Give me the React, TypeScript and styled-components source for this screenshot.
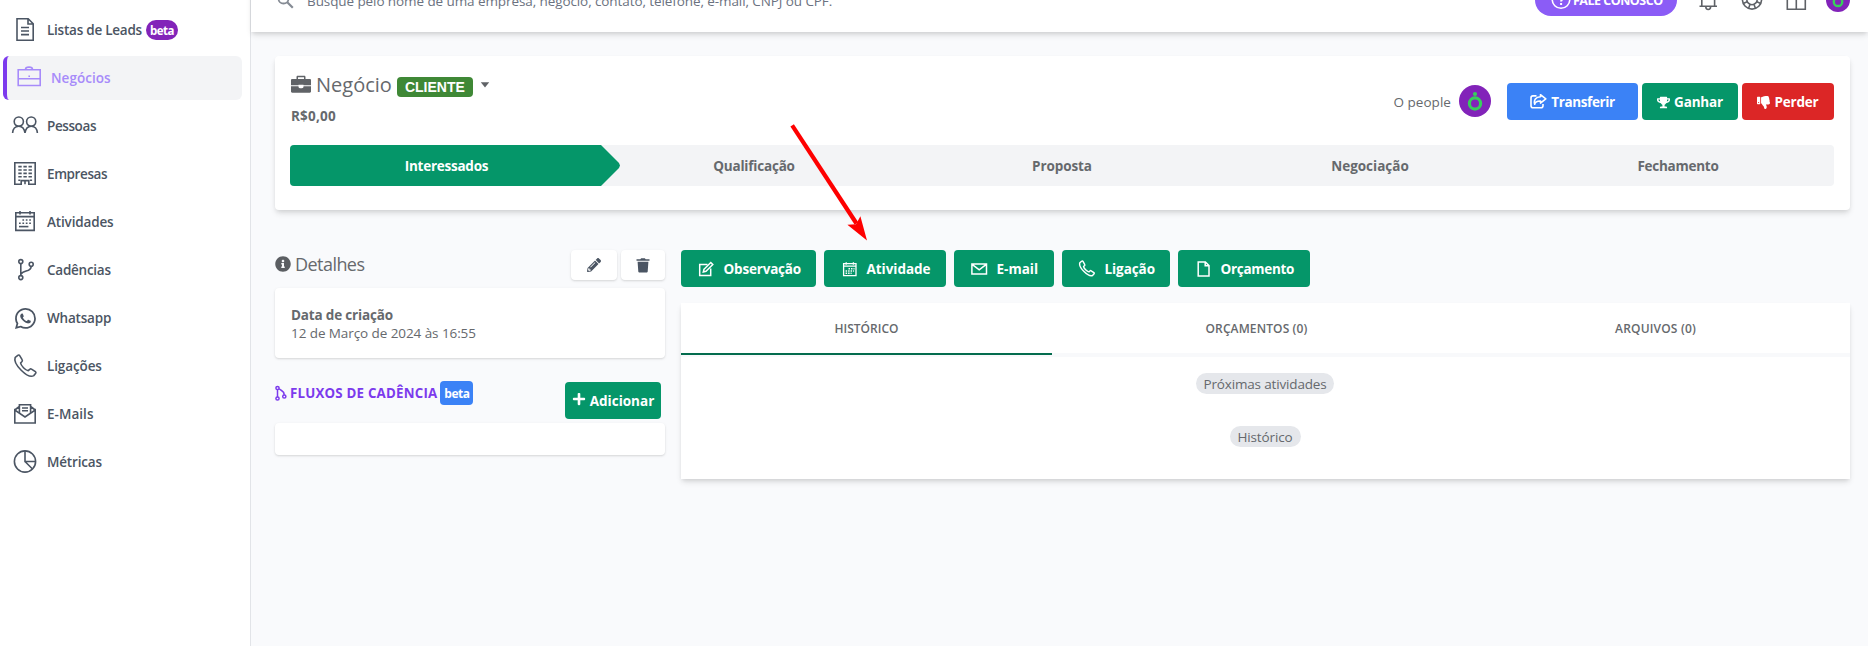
import React from 'react';
import styled, { createGlobalStyle, css } from 'styled-components';
import { FaInfoCircle, FaPlus, FaTrophy, FaThumbsDown, FaPencilAlt } from 'react-icons/fa';
import { BsWhatsapp } from 'react-icons/bs';

const GlobalStyle = createGlobalStyle`
  * { box-sizing: border-box; }
  body {
    margin: 0;
    background: #f9fafc;
    color: #66696d;
    font-family: 'Open Sans', 'Noto Sans', sans-serif;
    font-size: 13.5px;
  }
`;

const green = '#059669';
const cardShadow = '0 1px 3px rgba(0, 0, 0, 0.1), 0 1px 2px rgba(0, 0, 0, 0.06)';
const deepShadow = '0 4px 6px -1px rgba(0, 0, 0, 0.12), 0 2px 4px -1px rgba(0, 0, 0, 0.08)';

/* ---------- shared ---------- */

const Label = styled.span<{ $ls?: number; $size?: number; $weight?: number }>`
  white-space: nowrap;
  letter-spacing: ${(p) => p.$ls ?? 0}px;
  ${(p) => p.$size && css`font-size: ${p.$size}px;`}
  ${(p) => p.$weight && css`font-weight: ${p.$weight};`}
`;

const Svg = styled.svg<{ $sw?: number }>`
  flex: none;
  fill: none;
  stroke: currentColor;
  stroke-width: ${(p) => p.$sw ?? 1.6};
`;

const Button = styled.button<{ $bg?: string; $w: number }>`
  display: flex;
  align-items: center;
  justify-content: center;
  width: ${(p) => p.$w}px;
  height: 37px;
  padding: 1px 0 0;
  border: 0;
  border-radius: 4px;
  background: ${(p) => p.$bg ?? green};
  color: #fff;
  font: 700 13.5px 'Open Sans', 'Noto Sans', sans-serif;
  svg { flex: none; }
`;

/* ---------- page frame ---------- */

const Page = styled.div`
  display: flex;
  height: 646px;
  overflow: hidden;
`;

const Sidebar = styled.nav`
  display: flex;
  flex-direction: column;
  flex: none;
  gap: 4px;
  width: 251px;
  padding-top: 8px;
  background: #fff;
  border-right: 1px solid #e2e4e8;
`;

const NavItem = styled.div<{ $active?: boolean }>`
  display: flex;
  align-items: center;
  gap: 8px;
  height: 44px;
  margin: 0 8px 0 3px;
  padding-left: 8px;
  border-radius: 6px;
  color: ${(p) => (p.$active ? '#a78bfa' : '#4b5563')};
  font-weight: 600;
  ${(p) => p.$active && css`
    background: #f3f4f6;
    border-left: 4px solid #7c3aed;
  `}
`;

const NavBeta = styled.span`
  display: flex;
  align-items: center;
  justify-content: center;
  width: 32px;
  height: 20px;
  margin-left: -4px;
  padding-top: 1px;
  border-radius: 10px;
  background: #8223b9;
  color: #fff;
`;

const WhatsappBox = styled.span`
  display: grid;
  place-items: center;
  width: 28px;
  height: 28px;
`;

const Main = styled.main`
  display: flex;
  flex-direction: column;
  flex: 1;
  min-width: 0;
`;

const TopBar = styled.header`
  display: flex;
  align-items: center;
  flex: none;
  height: 64px;
  margin-top: -32px;
  padding: 0 18px 0 26px;
  background: #fff;
  box-shadow: ${deepShadow};
`;

const SearchField = styled.div`
  display: flex;
  align-items: center;
  flex: 1;
  gap: 13px;
  color: #6b7280;
  svg { color: #858b94; }
  & > span { padding-top: 2px; }
`;

const ContactPill = styled.div`
  display: flex;
  align-items: center;
  gap: 2px;
  width: 142px;
  height: 32px;
  margin-right: 20px;
  padding-left: 16px;
  border-radius: 16px;
  background: #8b5cf6;
  color: #fff;
`;

const TopIcons = styled.div`
  display: flex;
  align-items: center;
  gap: 21px;
  margin-right: 19px;
  color: #5e6166;
`;

const Body = styled.div`
  display: flex;
  flex-direction: column;
  gap: 40px;
  padding: 24px 18px 0 24px;
`;

/* ---------- deal card ---------- */

const DealCard = styled.section`
  height: 154px;
  padding: 16px 16px 0 15px;
  border-radius: 4px;
  background: #fff;
  box-shadow: ${deepShadow};
`;

const DealTop = styled.div`
  display: flex;
  justify-content: space-between;
  height: 73px;
`;

const DealTitle = styled.div`
  display: flex;
  align-items: center;
  gap: 5px;
  height: 25px;
  padding-left: 1px;
`;

const ClientTag = styled.span`
  display: flex;
  align-items: center;
  justify-content: center;
  width: 76px;
  height: 20px;
  margin: 5px 2px 0 0;
  border-radius: 4px;
  background: #3f8836;
  color: #fff;
  font-family: 'Liberation Sans', Arial, sans-serif;
`;

const Amount = styled.div`
  display: flex;
  align-items: center;
  height: 37px;
  padding-left: 1px;
  font-weight: 700;
`;

const DealActions = styled.div`
  display: flex;
  align-items: center;
  gap: 4px;
  height: 37px;
  margin-top: 11px;
  ${Button} { gap: 4px; }
`;

const Owner = styled.div`
  display: flex;
  align-items: center;
  gap: 8px;
  margin-right: 12px;
  padding-bottom: 1px;
  & > span { padding-top: 2px; }
`;

const Stages = styled.div`
  display: flex;
  height: 41px;
  padding-left: 2px;
  border-radius: 4px;
  background: #f3f4f6;
`;

const Stage = styled.div<{ $active?: boolean }>`
  display: flex;
  align-items: center;
  justify-content: center;
  width: 308px;
  font-weight: 700;
  ${(p) => p.$active && css`
    width: 330px;
    margin: 0 -20px 0 -2px;
    padding-right: 17px;
    border-radius: 4px 0 0 4px;
    background: ${green};
    color: #fff;
    clip-path: polygon(0 0, 311px 0, 329px 18px, 330px 20.5px, 329px 23px, 311px 100%, 0 100%);
  `}
`;

/* ---------- columns ---------- */

const Columns = styled.div`
  display: flex;
  gap: 16px;
`;

const Details = styled.aside`
  width: 390px;
  flex: none;
`;

const DetailsHead = styled.div`
  display: flex;
  align-items: center;
  gap: 4px;
  height: 30px;
`;

const DetailsTitle = styled.div`
  display: flex;
  align-items: center;
  flex: 1;
  gap: 4px;
  padding-bottom: 2px;
`;

const ToolButton = styled.button<{ $w: number }>`
  display: flex;
  align-items: center;
  justify-content: center;
  width: ${(p) => p.$w}px;
  height: 30px;
  padding: 0;
  border: 0;
  border-radius: 4px;
  background: #fff;
  color: #4b5563;
  box-shadow: ${cardShadow};
`;

const InfoCard = styled.div<{ $h: number; $top: number }>`
  height: ${(p) => p.$h}px;
  margin-top: ${(p) => p.$top}px;
  padding: 18px 16px 0;
  border-radius: 4px;
  background: #fff;
  box-shadow: ${cardShadow};
  line-height: 18px;
  span { display: block; }
`;

const FlowHead = styled.div`
  display: flex;
  align-items: flex-start;
  justify-content: space-between;
  margin-top: 23px;
  padding-right: 4px;
  ${Button} { margin-top: 1px; gap: 4px; }
`;

const FlowTitle = styled.div`
  display: flex;
  align-items: center;
  height: 24px;
  color: #7c3aed;
  font-weight: 700;
  svg { margin-right: 3px; }
`;

const FlowBeta = styled.span`
  display: flex;
  align-items: center;
  justify-content: center;
  width: 33px;
  height: 24px;
  margin-left: 3px;
  padding-top: 1px;
  border-radius: 4px;
  background: #3b82f6;
  color: #fff;
`;

const Activity = styled.section`
  flex: 1;
  min-width: 0;
`;

const ActionRow = styled.div`
  display: flex;
  gap: 8px;
  ${Button} { justify-content: flex-start; padding-left: 16px; }
  svg { margin-right: 8.5px; }
`;

const TabCard = styled.div`
  height: 176px;
  margin-top: 16px;
  background: #fff;
  box-shadow: ${deepShadow};
`;

const TabBar = styled.div`
  display: flex;
  height: 54px;
  border-bottom: 4px solid #f8f9fb;
`;

const Tab = styled.div<{ $active?: boolean; $w: number }>`
  display: flex;
  align-items: center;
  justify-content: center;
  width: ${(p) => p.$w}px;
  height: 52px;
  font-size: 12px;
  font-weight: 600;
  border-bottom: 2px solid ${(p) => (p.$active ? '#046c4e' : 'transparent')};
`;

const Timeline = styled.div`
  display: flex;
  flex-direction: column;
  align-items: center;
  gap: 32px;
  padding: 16px 1px 0 0;
`;

const Chip = styled.div<{ $w: number }>`
  display: flex;
  align-items: center;
  justify-content: center;
  width: ${(p) => p.$w}px;
  height: 21px;
  padding-top: 1px;
  border-radius: 11px;
  background: #e5e7eb;
`;

/* annotation pointing at the "Atividade" button */
const Pointer = styled.svg`
  position: absolute;
  left: 780px;
  top: 115px;
  pointer-events: none;
`;

/* ---------- icons ---------- */

const navIcons: Record<string, React.ReactNode> = {
  doc: (
    <>
      <path d="M6 2.8h11.2l5 5v16.4H6z M17 3v5h5" />
      <path d="M10 11.5h8 M10 15h8 M10 18.6h8" />
    </>
  ),
  deal: (
    <>
      <path d="M3.2 5.7h22v15.8h-22z M3.2 14.8h22" />
      <path d="M10.5 5.4c0-3 7-3 7 0" />
      <path d="M13.4 12.2h1.6" />
    </>
  ),
  people: (
    <>
      <circle cx="7.8" cy="9.6" r="4.6" />
      <circle cx="20.2" cy="9.6" r="4.6" />
      <path d="M1.6 21c.2-4 2.6-6.8 6.2-6.8s5.6 2.8 6.2 6.8c.6-4 2.6-6.8 6.2-6.8s6 2.8 6.2 6.8" />
    </>
  ),
  building: (
    <>
      <path d="M3.8 2.8h20.4v21.4h-6.4v-3.6h-7.6v3.6H3.8z M14 20.6v3.6" />
      <path strokeDasharray="3.4 1.7" d="M7.3 6.6h14 M7.3 10h14 M7.3 13.4h14 M7.3 16.8h14" />
      <path d="M7.3 20.2h2 M18.9 20.2h2.2" />
    </>
  ),
  calendar: (
    <>
      <path d="M4.8 4.8h18.4v17.6H4.8z M4.8 8.6h18.4 M9 3v3.4 M19 3v3.4" />
      <path strokeDasharray="1.7 1.7" d="M11.4 12h9 M8 15.2h12.4" />
      <path d="M8 18.6h9.4" />
    </>
  ),
  branch: (
    <>
      <circle cx="9.8" cy="5.6" r="2" />
      <circle cx="9.8" cy="21.6" r="2" />
      <circle cx="20.2" cy="8.2" r="2" />
      <path d="M9.8 7.6v12 M20.2 10.2c0 6.4-8 3.4-10.2 8" />
    </>
  ),
  phone: (
    <path d="M4.2 5.4c-1 2.6.3 7.2 6 12.8s10.3 6.8 12.6 5.4l1.9-2.3c.4-.6.2-1.2-.3-1.6l-3.9-2.6c-.6-.4-1.3-.3-1.8.2l-1.5 1.4c-1.2-.2-3-1.3-4.7-3s-2.7-3.3-2.9-4.7l1.4-1.5c.4-.5.5-1.2.1-1.8L8.7 3.6c-.5-.7-1.3-.8-1.9-.3z" />
  ),
  mail: (
    <>
      <path d="M3.8 10v13h20.4V10l-10.2 7z" />
      <path d="M8.4 13V4.8h11.2V13 M3.8 10l4.6-3.5 M24.2 10l-4.6-3.5" />
      <path d="M11 8h6 M11 10.8h6" />
    </>
  ),
  pie: (
    <>
      <circle cx="14" cy="13.5" r="10.6" />
      <path d="M14 3v10.5h10.5 M14 13.5l7.5 7.5" />
    </>
  ),
};

const NavIcon = ({ name }: { name: string }) =>
  name === 'whatsapp' ? (
    <WhatsappBox><BsWhatsapp size={21} /></WhatsappBox>
  ) : (
    <Svg width="28" height="28" viewBox="0 0 28 28">{navIcons[name]}</Svg>
  );

const Avatar = ({ size }: { size: number }) => (
  <svg width={size} height={size} viewBox="0 0 32 32">
    <circle cx="16" cy="16" r="16" fill="#8223b9" />
    <circle cx="16" cy="18.5" r="5.6" fill="none" stroke="#37cf5b" strokeWidth="3.2" />
    <circle cx="16" cy="9" r="2.1" fill="#37cf5b" />
  </svg>
);

const nav: { icon: string; text: string; ls: number; active?: boolean; beta?: boolean }[] = [
  { icon: 'doc', text: 'Listas de Leads', ls: -0.24, beta: true },
  { icon: 'deal', text: 'Negócios', ls: 0.02, active: true },
  { icon: 'people', text: 'Pessoas', ls: -0.4 },
  { icon: 'building', text: 'Empresas', ls: -0.4 },
  { icon: 'calendar', text: 'Atividades', ls: -0.15 },
  { icon: 'branch', text: 'Cadências', ls: -0.25 },
  { icon: 'whatsapp', text: 'Whatsapp', ls: -0.2 },
  { icon: 'phone', text: 'Ligações', ls: -0.12 },
  { icon: 'mail', text: 'E-Mails', ls: 0.04 },
  { icon: 'pie', text: 'Métricas', ls: -0.18 },
];

export default function App() {
  return (
    <>
      <GlobalStyle />
      <Page>
        <Sidebar>
          {nav.map((n) => (
            <NavItem key={n.text} $active={n.active}>
              <NavIcon name={n.icon} />
              <Label $ls={n.ls}>{n.text}</Label>
              {n.beta && <NavBeta><Label $size={11.5} $weight={700} $ls={-0.5}>beta</Label></NavBeta>}
            </NavItem>
          ))}
        </Sidebar>

        <Main>
          <TopBar>
            <SearchField>
              <Svg width="17" height="17" viewBox="0 0 17 17" $sw={1.8}>
                <circle cx="6.5" cy="6.5" r="5" />
                <path d="M10.3 10.3l5.5 5.5" strokeWidth="2.2" />
              </Svg>
              <Label $ls={-0.09}>Busque pelo nome de uma empresa, negócio, contato, telefone, e-mail, CNPJ ou CPF.</Label>
            </SearchField>
            <ContactPill>
              <Svg width="20" height="20" viewBox="0 0 20 20" $sw={1.6}>
                <circle cx="10" cy="9.5" r="8.8" />
                <path d="M7.5 7.5c0-3.5 5.2-3.5 5.2-.3 0 2-2.6 2-2.6 4.3" strokeWidth="2" />
                <path d="M10.1 13v2" strokeWidth="2" />
              </Svg>
              <Label $size={12.5} $weight={700} $ls={-0.5}>FALE CONOSCO</Label>
            </ContactPill>
            <TopIcons>
              <Svg width="22" height="22" viewBox="0 0 22 22">
                <path d="M2.5 17.3h17.5 M4.8 17V8c0-7 12.8-7 12.8 0v9 M8.8 17.5c0 4 4.8 4 4.8 0" />
              </Svg>
              <Svg width="24" height="24" viewBox="0 0 24 24">
                <circle cx="12" cy="11.5" r="9.6" />
                <circle cx="12" cy="11.5" r="5.2" />
                <path d="M14 16.5l1.5 4 M16.8 13.8l4 1.7 M10 16.5l-1.5 4 M7.2 13.8l-4 1.7" />
              </Svg>
              <Svg width="22" height="22" viewBox="0 0 22 22">
                <path d="M2.3 1.7h18v18.5h-18z M11.3 1.7v18.5" />
              </Svg>
            </TopIcons>
            <Avatar size={24} />
          </TopBar>

          <Body>
            <DealCard>
              <DealTop>
                <div>
                  <DealTitle>
                    <svg width="20" height="20" viewBox="0 0 20 20" fill="#606367">
                      <path d="M5.5 4V2c0-.8.5-1.3 1.3-1.3h6.4c.8 0 1.3.5 1.3 1.3v2h4.3c.7 0 1.2.5 1.2 1.2V10.3h-7.5V9.7h-5v.6H0V5.2C0 4.5.5 4 1.2 4z M7 4h6V2.2H7z" fillRule="evenodd" />
                      <path d="M0 11.3h7.5v.5c0 2 5 2 5 0v-.5H20V16.5c0 .7-.5 1.2-1.2 1.2H1.2c-.7 0-1.2-.5-1.2-1.2z" />
                    </svg>
                    <Label $size={20}>Negócio</Label>
                    <ClientTag><Label $size={14} $weight={700}>CLIENTE</Label></ClientTag>
                    <svg width="10" height="6" viewBox="0 0 10 6"><path d="M.8.3h8.4L5 5.6z" fill="#606367" /></svg>
                  </DealTitle>
                  <Amount><Label $ls={0.2}>R$0,00</Label></Amount>
                </div>
                <DealActions>
                  <Owner>
                    <Label $ls={0.04}>O people</Label>
                    <Avatar size={32} />
                  </Owner>
                  <Button $w={131} $bg="#3b82f6">
                    <Svg width="17" height="16" viewBox="0 0 17 16" $sw={1.6}>
                      <path d="M6.5 1.9H3c-1.3 0-2 .7-2 2v7.8c0 1.3.7 2 2 2h8c1.3 0 2-.7 2-2v-1.7" />
                      <path d="M10.5 2.7V.7l5.3 4.2-5.3 4.2V7c-3.5-.1-5.3.8-5.8 3.3-1.2-4.4 1-7.4 5.8-7.6z" strokeLinejoin="round" />
                    </Svg>
                    <Label $ls={-0.38}>Transferir</Label>
                  </Button>
                  <Button $w={96}>
                    <FaTrophy size={13} />
                    <Label $ls={-0.2}>Ganhar</Label>
                  </Button>
                  <Button $w={92} $bg="#dc2626">
                    <FaThumbsDown size={13} />
                    <Label $ls={-0.2}>Perder</Label>
                  </Button>
                </DealActions>
              </DealTop>
              <Stages>
                <Stage $active><Label $ls={-0.25}>Interessados</Label></Stage>
                <Stage><Label $ls={-0.2}>Qualificação</Label></Stage>
                <Stage><Label $ls={-0.1}>Proposta</Label></Stage>
                <Stage><Label>Negociação</Label></Stage>
                <Stage><Label $ls={-0.25}>Fechamento</Label></Stage>
              </Stages>
            </DealCard>

            <Columns>
              <Details>
                <DetailsHead>
                  <DetailsTitle>
                    <FaInfoCircle size={16} color="#5b5e62" />
                    <Label $size={18} $ls={-0.55}>Detalhes</Label>
                  </DetailsTitle>
                  <ToolButton $w={46}><FaPencilAlt size={14} /></ToolButton>
                  <ToolButton $w={44}>
                    <svg width="14" height="15" viewBox="0 0 14 15" fill="currentColor">
                      <path d="M.5 1.2h3.8L5.2.2h3.6l.9 1h3.8v1.5H.5z M1.6 3.7h10.8l-.7 9.8c-.1.7-.6 1.1-1.2 1.1h-7c-.6 0-1.1-.4-1.2-1.1z" />
                    </svg>
                  </ToolButton>
                </DetailsHead>
                <InfoCard $h={70} $top={8}>
                  <Label $weight={700} $ls={-0.17}>Data de criação</Label>
                  <Label $ls={-0.08}>12 de Março de 2024 às 16:55</Label>
                </InfoCard>
                <FlowHead>
                  <FlowTitle>
                    <Svg width="12" height="16" viewBox="0 0 12 16" $sw={1.5}>
                      <circle cx="2.5" cy="3" r="1.6" />
                      <circle cx="2.5" cy="13.5" r="1.6" />
                      <circle cx="9.3" cy="11.5" r="1.6" />
                      <path d="M2.5 4.6v7.3 M4.1 3.6c2 2.6 5 1.8 5.2 6.3" />
                    </Svg>
                    <Label $size={13.3} $ls={0.21}>FLUXOS DE CADÊNCIA</Label>
                    <FlowBeta><Label $size={12} $weight={700} $ls={-0.5}>beta</Label></FlowBeta>
                  </FlowTitle>
                  <Button $w={96}>
                    <FaPlus size={14} style={{ marginTop: -4 }} />
                    <Label>Adicionar</Label>
                  </Button>
                </FlowHead>
                <InfoCard $h={32} $top={4} />
              </Details>

              <Activity>
                <ActionRow>
                  <Button $w={135}>
                    <Svg width="18" height="18" viewBox="0 0 18 18" $sw={1.5}>
                      <path d="M10.5 4.6H2.7v11h11V8.5" />
                      <path d="M7 9.2l6.8-6.7 2 2L9 11.3l-2.7.7z" />
                    </Svg>
                    <Label $ls={-0.19}>Observação</Label>
                  </Button>
                  <Button $w={122}>
                    <Svg width="18" height="18" viewBox="0 0 18 18" $sw={1.3}>
                      <path d="M3.6 3.6h12.4v12h-12.4z M3.6 6.2h12.4 M6.2 2.2v2.6 M13.4 2.2v2.6" />
                      <path strokeDasharray="1.5 1" d="M8.5 8.7h6 M5.6 11h8.5 M5.6 13.2h6" strokeWidth="1.5" />
                    </Svg>
                    <Label $ls={-0.03}>Atividade</Label>
                  </Button>
                  <Button $w={100}>
                    <Svg width="18" height="18" viewBox="0 0 18 18" $sw={1.5}>
                      <path d="M1.9 4h14.6v10H1.9z M2.1 4.3l7.1 5.5 7.1-5.5" />
                    </Svg>
                    <Label>E-mail</Label>
                  </Button>
                  <Button $w={108}>
                    <Svg width="18" height="18" viewBox="1.5 1.5 26 26" $sw={2.1}>{navIcons.phone}</Svg>
                    <Label $ls={-0.08}>Ligação</Label>
                  </Button>
                  <Button $w={132}>
                    <Svg width="18" height="18" viewBox="0 0 18 18" $sw={1.5}>
                      <path d="M4.2 2h7.2l3.6 3.6V16H4.2z M11.2 2v3.8H15" />
                    </Svg>
                    <Label $ls={-0.3}>Orçamento</Label>
                  </Button>
                </ActionRow>
                <TabCard>
                  <TabBar>
                    <Tab $w={371} $active><Label>HISTÓRICO</Label></Tab>
                    <Tab $w={409}><Label $ls={0.12}>ORÇAMENTOS (0)</Label></Tab>
                    <Tab $w={389}><Label $ls={0.18}>ARQUIVOS (0)</Label></Tab>
                  </TabBar>
                  <Timeline>
                    <Chip $w={138}><Label $ls={-0.16}>Próximas atividades</Label></Chip>
                    <Chip $w={71}><Label $ls={-0.12}>Histórico</Label></Chip>
                  </Timeline>
                </TabCard>
              </Activity>
            </Columns>
          </Body>
        </Main>
      </Page>
      <Pointer width="100" height="135" viewBox="780 115 100 135" fill="#fe0000">
        <path d="M790.4 126.6l3.5-2.3 64.4 98-3.6 2.4z" />
        <path d="M867 240.5l-19.6-15.7 8.6-.6 4.4-7.900z" />
      </Pointer>
    </>
  );
}
